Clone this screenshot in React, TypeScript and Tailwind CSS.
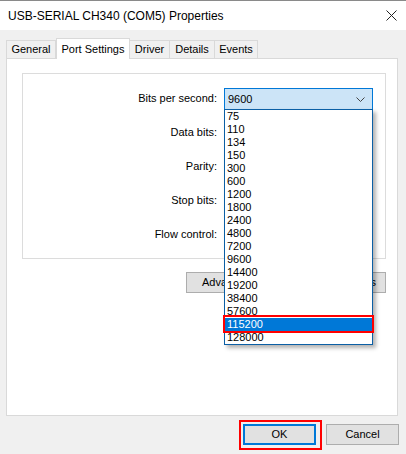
import React from "react";

const rates = ["75","110","134","150","300","600","1200","1800","2400","4800","7200","9600","14400","19200","38400","57600","115200","128000"];

function Row({ label }: { label: string }) {
  return (
    <div className="flex items-center h-[21px]">
      <div className="w-[201px] text-right pr-[7px] text-[11px] text-[#000]">{label}</div>
      <div className="w-[149px] h-[21px] border border-[#7a7a7a] bg-white" />
    </div>
  );
}

export default function App() {
  return (
    <div className="relative w-[406px] h-[454px] bg-[#f0f0f0] overflow-hidden text-black" style={{ fontFamily: '"Liberation Sans", Arial, sans-serif' }}>
      {/* Title bar */}
      <div className="h-[30px] bg-white border-t border-[#8a8a8a] flex items-center pl-[8px] pr-[8px]">
        <div className="flex-1 text-[12px]">USB-SERIAL CH340 (COM5) Properties</div>
        <svg width="11" height="11" viewBox="0 0 11 11" className="mr-[1px]">
          <path d="M0.5 0.5 L10.5 10.5 M10.5 0.5 L0.5 10.5" stroke="#222" strokeWidth="1" />
        </svg>
      </div>

      {/* Tabs */}
      <div className="flex items-end h-[28px] pl-[6px] text-[11px]">
        <div className="h-[18px] border border-b-0 border-[#d9d9d9] bg-[#f0f0f0] flex items-center justify-center w-[50px]">General</div>
        <div className="h-[21px] border border-b-0 border-[#d9d9d9] bg-white flex items-start pt-[2px] justify-center w-[74px] relative z-10 -mb-px">Port Settings</div>
        <div className="h-[18px] border border-b-0 border-l-0 border-[#d9d9d9] bg-[#f0f0f0] flex items-center justify-center w-[40px]">Driver</div>
        <div className="h-[18px] border border-b-0 border-l-0 border-[#d9d9d9] bg-[#f0f0f0] flex items-center justify-center w-[45px]">Details</div>
        <div className="h-[18px] border border-b-0 border-l-0 border-[#d9d9d9] bg-[#f0f0f0] flex items-center justify-center w-[43px]">Events</div>
      </div>

      {/* Panel */}
      <div className="ml-[6px] mr-[8px] h-[358px] bg-white border border-[#d9d9d9] pl-[15px] pr-[11px] pt-[14px]">
        <div className="h-[186px] border border-[#dcdcdc] pt-[14px] flex flex-col gap-[13px]">
          <Row label="Bits per second:" />
          <Row label="Data bits:" />
          <Row label="Parity:" />
          <Row label="Stop bits:" />
          <Row label="Flow control:" />
        </div>
        <div className="flex justify-end gap-[8px] mt-[13px] text-[11px]">
          <div className="w-[90px] h-[21px] bg-[#e1e1e1] border border-[#adadad] flex items-center justify-center">Advanced...</div>
          <div className="w-[102px] h-[21px] bg-[#e1e1e1] border border-[#adadad] flex items-center justify-center">Restore Defaults</div>
        </div>
      </div>

      {/* Bottom buttons */}
      <div className="flex justify-end gap-[10px] mt-[8px] pr-[7px] text-[11px]">
        <div className="w-[73px] h-[21px] bg-[#e1e1e1] border-2 border-[#0078d7] flex items-center justify-center">OK</div>
        <div className="w-[73px] h-[21px] bg-[#e1e1e1] border border-[#adadad] flex items-center justify-center">Cancel</div>
      </div>

      {/* Selected combobox (focused) */}
      <div className="absolute left-[224px] top-[88px] w-[149px] h-[22px] bg-[#cce4f7] border border-[#0078d7] flex items-center pl-[3px] text-[11px]">
        <span className="flex-1">9600</span>
        <svg width="9" height="5" viewBox="0 0 9 5" className="mr-[7px]">
          <path d="M0.5 0.5 L4.5 4.5 L8.5 0.5" stroke="#444" strokeWidth="1" fill="none" />
        </svg>
      </div>

      {/* Dropdown list */}
      <div className="absolute left-[224px] top-[109px] w-[149px] h-[236px] bg-white border border-[#0b5fa5] shadow-[3px_3px_4px_rgba(0,0,0,0.3)] text-[11px] leading-[13px]">
        {rates.map((r) => (
          <div key={r} className={r === "115200" ? "h-[13px] pl-[2px] bg-[#0078d7] text-white" : "h-[13px] pl-[2px]"}>{r}</div>
        ))}
      </div>

      {/* Red highlight boxes */}
      <div className="absolute left-[223px] top-[315px] w-[151px] h-[18px] border-2 border-[#ff0000]" />
      <div className="absolute left-[239px] top-[420px] w-[83px] h-[30px] border-2 border-[#ff0000]" />
    </div>
  );
}
